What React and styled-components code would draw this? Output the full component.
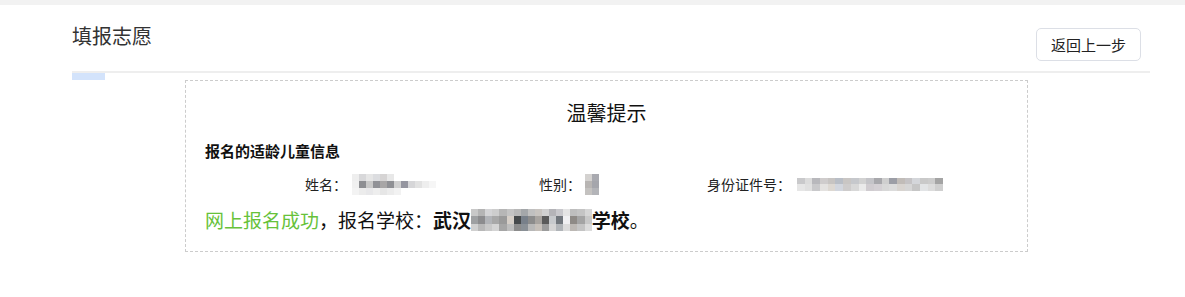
import React from 'react';
import styled, { createGlobalStyle } from 'styled-components';

const GlobalStyle = createGlobalStyle`
  body {
    margin: 0;
    background: #fff;
    font-family: "Noto Sans CJK SC", "Noto Sans", sans-serif;
    color: #333;
  }
`;

const Page = styled.div`
  border-top: 5px solid #f2f2f2;
  width: 1185px;
  height: 292px;
`;

const Header = styled.div`
  margin-left: 72px;
  width: 1078px;
  height: 66px;
  display: flex;
  justify-content: space-between;
  align-items: flex-start;
`;

const Title = styled.h1`
  margin: 18px 0 0;
  font-size: 20px;
  line-height: 26px;
  font-weight: normal;
  color: #333;
`;

const BackButton = styled.button`
  margin: 23px 9px 0 0;
  width: 105px;
  height: 33px;
  border: 1px solid #dcdfe6;
  border-radius: 5px;
  background: #fff;
  font-family: inherit;
  font-size: 15px;
  color: #222;
  padding: 0;
  cursor: pointer;
`;

const Divider = styled.div`
  margin-left: 72px;
  width: 1078px;
  height: 2px;
  background: #eeeeee;
`;

const ActiveTab = styled.div`
  margin-left: 72px;
  width: 33px;
  height: 7px;
  background: #d3e3fb;
`;

const NoticeBox = styled.div`
  margin-left: 185px;
  width: 843px;
  height: 172px;
  box-sizing: border-box;
  border: 1px dashed #cccccc;
  padding: 0 19px;
`;

const NoticeTitle = styled.div`
  margin-top: 19px;
  text-align: center;
  font-size: 20px;
  line-height: 26px;
  color: #111;
`;

const SectionTitle = styled.div`
  margin-top: 15px;
  font-size: 15px;
  line-height: 20px;
  font-weight: bold;
  color: #111;
`;

const InfoRow = styled.div`
  margin-top: 11px;
  padding-left: 100px;
  display: grid;
  grid-template-columns: 234px 168px 1fr;
  align-items: center;
  height: 24px;
`;

const Field = styled.div`
  display: flex;
  align-items: center;
  font-size: 14px;
  color: #222;
`;

const Result = styled.div`
  margin-top: 11px;
  display: flex;
  align-items: center;
  font-size: 19px;
  line-height: 26px;
  color: #111;
`;

const Success = styled.span`
  color: #67c23a;
`;

const Strong = styled.span`
  font-weight: bold;
`;

const MosaicGrid = styled.span`
  display: inline-grid;
  grid-template-columns: repeat(${p => p.$cols}, ${p => p.$w}px);
  grid-auto-rows: ${p => p.$h}px;
  margin-left: ${p => p.$gap || 0}px;
`;

const Cell = styled.span`
  display: block;
`;

const Mosaic = ({ rows, w = 7, h = 7, gap }) => (
  <MosaicGrid $cols={rows[0].length} $w={w} $h={h} $gap={gap}>
    {rows.flat().map((c, i) => (
      <Cell key={i} style={{ background: c }} />
    ))}
  </MosaicGrid>
);

const nameCells = [
  ['#eeeeee', '#d8d8da', '#e6e6e6', '#dcdde0', '#d6d4d4', '#e8e8e8', '#ffffff', '#ffffff', '#ffffff', '#ffffff', '#ffffff', '#ffffff'],
  ['#f0f0f0', '#8d8e92', '#c8c8c8', '#909196', '#a8a6a6', '#8f9094', '#d0d0d0', '#9596a0', '#d6d6d8', '#e2e2e2', '#eeeeee', '#f6f6f6'],
  ['#f3f3f3', '#ececec', '#e8e8ea', '#eeeeee', '#e6e6e6', '#ececec', '#f2f2f2', '#ffffff', '#ffffff', '#ffffff', '#ffffff', '#ffffff'],
];

const genderCells = [
  ['#d4d2d0', '#a9aab0'],
  ['#b8b5b3', '#a5a6ac'],
  ['#c4c2c0', '#b3b4b8'],
];

const idCells = [
  ['#c9c9cb', '#dcdcdc', '#b8b8bc', '#cfcccc', '#c7c4c2', '#b9bec6', '#c9c6c4', '#c6c8cc', '#d2d2d2', '#c4c4c8', '#a8a8ac', '#cfcfcf', '#9c9ea6', '#c1bcb8', '#c5c3c5', '#d4d6da', '#c9c9c9', '#cccccc', '#a4a4a4'],
  ['#e6e6e6', '#e0e0e0', '#c9c9cb', '#e4e2e0', '#ddd8d2', '#d2d6de', '#cecccc', '#d8d8d8', '#eaeaea', '#d0ccd0', '#d4d0d4', '#d8d8d8', '#dcdcdc', '#d8d4d0', '#d6d6d6', '#c6c6c6', '#e2e4e6', '#dcdcdc', '#cfcfcf'],
];

const schoolCells = [
  ['#c8c8c8', '#b4b4b4', '#d4d4d6', '#cdcdcd', '#b6b6b6', '#c4c4c4', '#b8b8b8', '#a4a7aa', '#c0c0c0', '#c8c4c0', '#d0d0d0', '#b4b4b8', '#c8c8cc', '#e4e4e4', '#bebebe', '#c4c4c4', '#d6d6d6'],
  ['#9ea0a2', '#8c8c8e', '#b2b4b8', '#a8a8a8', '#9a9a9a', '#d6cfc8', '#464a4c', '#78808a', '#8c8c8c', '#a8a4a0', '#5a5a5a', '#c6c9cc', '#70767c', '#f0f0f2', '#8e8a86', '#a4a4a4', '#c8c8c8'],
  ['#d0d0d0', '#b8b8b8', '#c8c8c8', '#d4d4d4', '#a6a6a6', '#bebebe', '#8c8c8c', '#8a9096', '#b8b8b8', '#c6c0ba', '#9c9c9c', '#d4d4d4', '#b0b4b8', '#dcdcdc', '#bcb8b4', '#c4c4c4', '#dcdcdc'],
];

export default function App() {
  return (
    <>
      <GlobalStyle />
      <Page>
        <Header>
          <Title>填报志愿</Title>
          <BackButton>返回上一步</BackButton>
        </Header>
        <Divider />
        <ActiveTab />
        <NoticeBox>
          <NoticeTitle>温馨提示</NoticeTitle>
          <SectionTitle>报名的适龄儿童信息</SectionTitle>
          <InfoRow>
            <Field>
              姓名：
              <Mosaic rows={nameCells} gap={5} />
            </Field>
            <Field>
              性别：
              <Mosaic rows={genderCells} gap={4} />
            </Field>
            <Field>
              身份证件号：
              <Mosaic rows={idCells} w={7.7} h={6.5} gap={6} />
            </Field>
          </InfoRow>
          <Result>
            <Success>网上报名成功</Success>，报名学校：
            <Strong>武汉</Strong>
            <Mosaic rows={schoolCells} w={7.1} h={7.3} />
            <Strong>学校</Strong>。
          </Result>
        </NoticeBox>
      </Page>
    </>
  );
}
